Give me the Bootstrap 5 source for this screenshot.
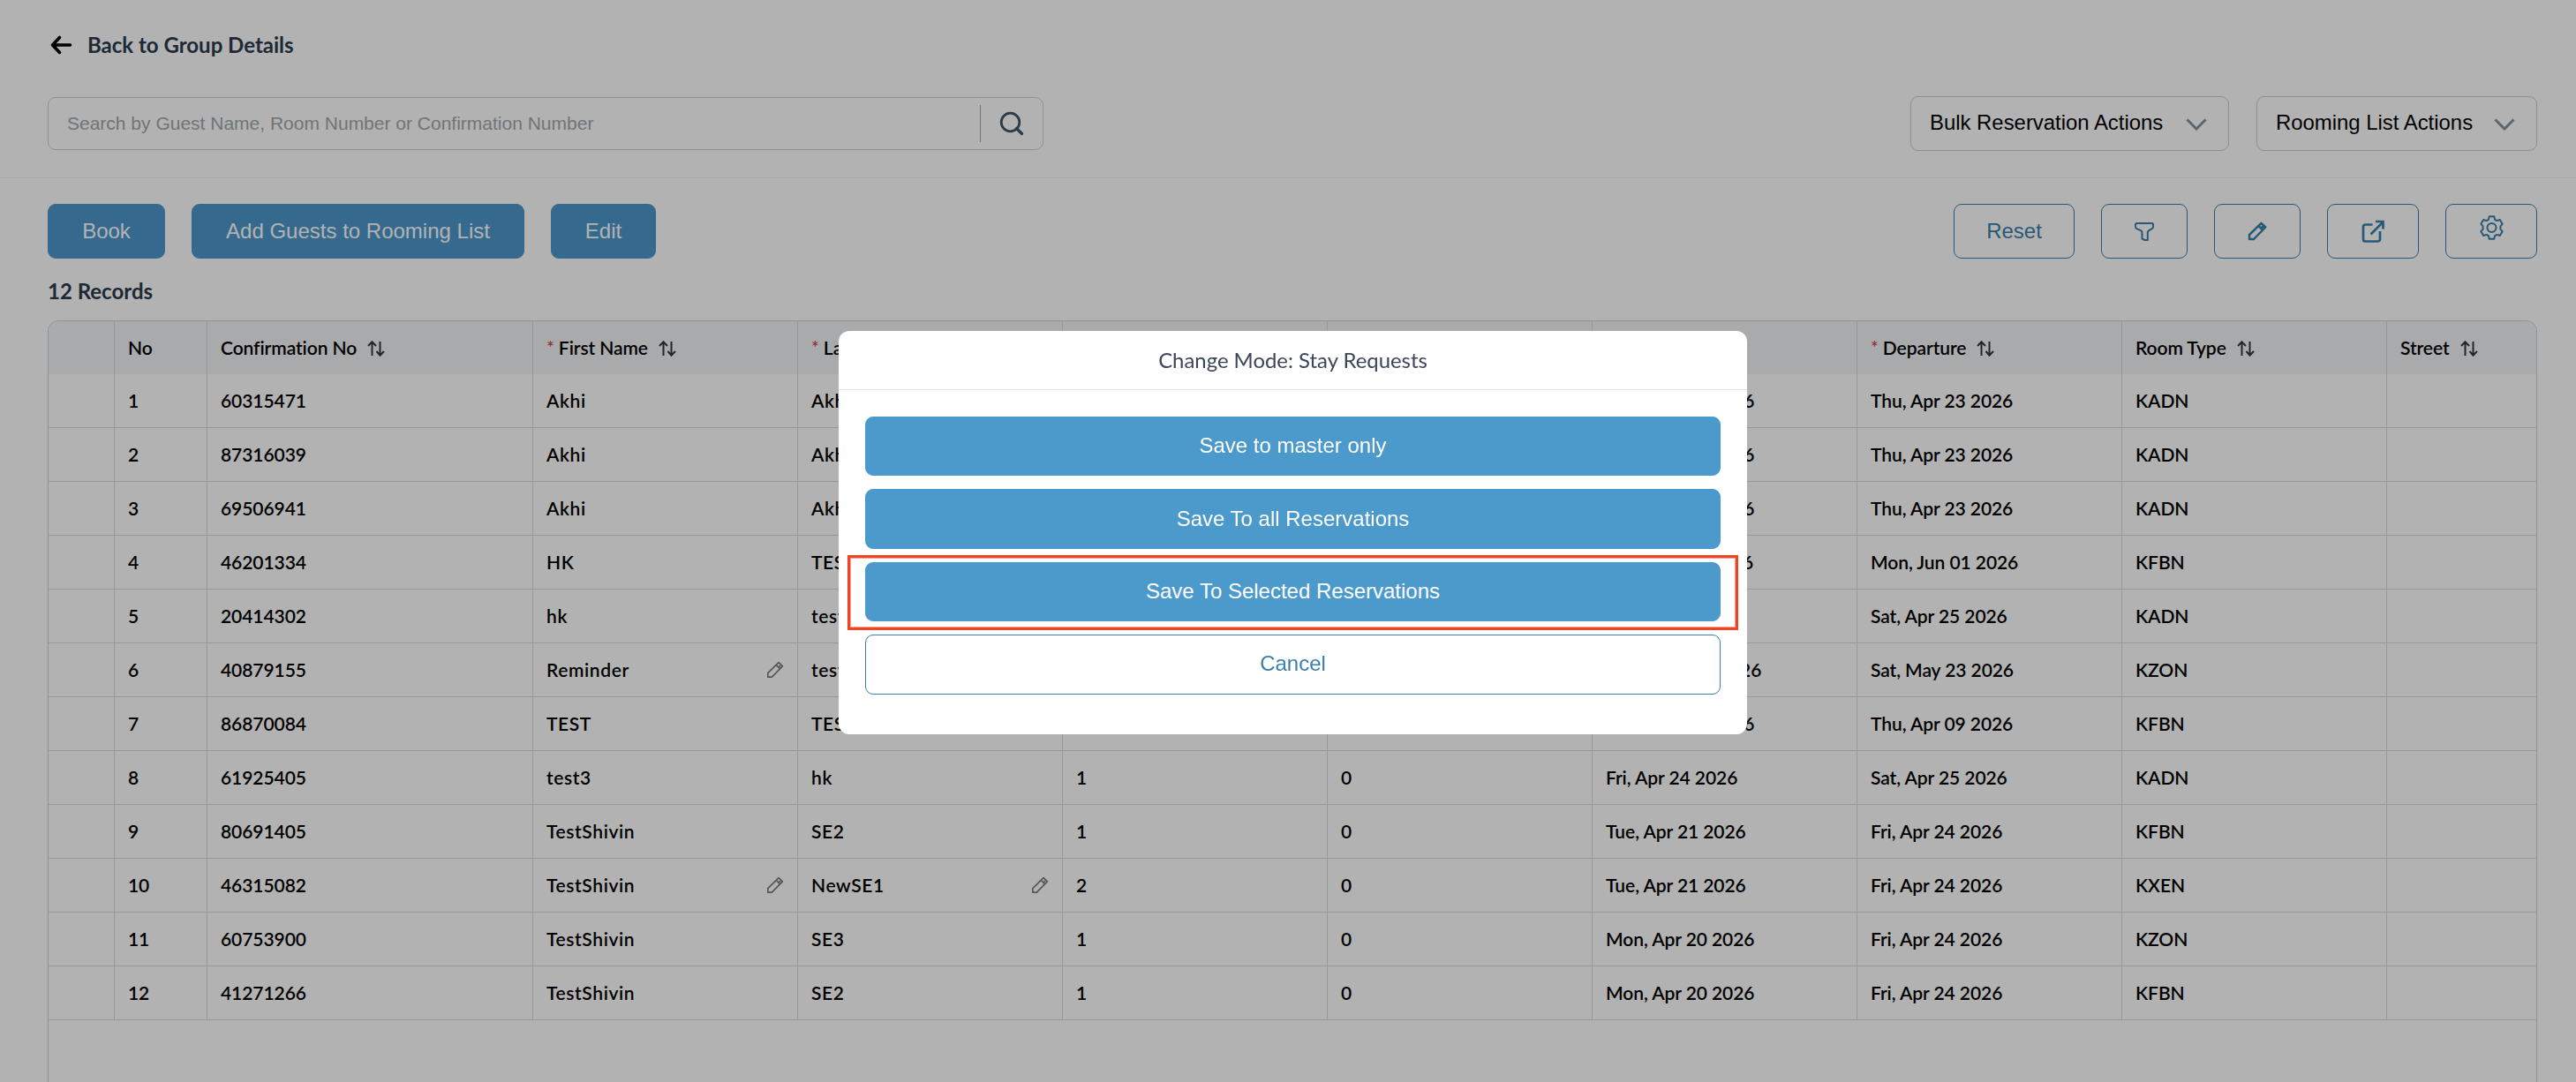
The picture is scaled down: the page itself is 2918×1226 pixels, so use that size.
<!DOCTYPE html>
<html lang="en">
<head>
<meta charset="utf-8">
<title>Rooming List</title>
<link href="https://cdn.jsdelivr.net/npm/bootstrap@5.3.0/dist/css/bootstrap.min.css" rel="stylesheet">
<style>
  body { font-family: Lato, sans-serif; font-size: 21px; color: #000; background: #fff; overflow: hidden; height: 1226px; }
  .arial { font-family: "Liberation Sans", Arial, sans-serif; }
  .topbar { height: 202px; padding: 0 44px 0 54px; border-bottom: 1px solid #eef0f2; }
  .backlink { height: 50px; margin-top: 26px; padding-left: 3px; gap: 17px; font-size: 24px; color: #2d3c4e; font-weight: 700; }
  .toolrow { margin-top: 33px; }
  .searchbox { width: 1128px; height: 60px; margin-top: 1px; border: 1px solid #d0d2d3; border-radius: 9px; }
  .searchbox .hint { padding-left: 21px; font-size: 21px; color: #9fa8ac; }
  .searchbox .vr { width: 1px; min-height: 0; height: 42px; opacity: 1; background: #a0a6a9; }
  .searchbox .go { width: 70px; }
  .menu-btn { height: 62px; border: 1px solid #ccced0; border-radius: 9px; font-size: 23.9px; padding: 0 0 3px 21px; color: #000; }
  .menu-btn svg { margin-top: 5px; }
  .actions { padding: 29px 44px 0 54px; }
  .abtn { --bs-btn-border-radius: 9px; --bs-btn-font-size: 24px; --bs-btn-padding-y: 0; --bs-btn-padding-x: 0; height: 62px; font-family: "Liberation Sans", Arial, sans-serif; }
  .fillbtn, .fillbtn:hover { background: #4c99cc; color: #fff; border-color: #4c99cc; }
  .linebtn, .linebtn:hover { background: #fff; color: #3a7fad; border-color: #3a7fad; }
  .records { font-size: 24px; font-weight: 700; color: #2d3c4e; line-height: 36px; margin: 19px 0 15px 54px; }
  .gridbox { margin: 0 44px 0 54px; height: 900px; border: 1px solid #d0d2d3; border-radius: 12px; overflow: hidden; }
  .gridbox table { table-layout: fixed; width: 100%; border-collapse: separate; border-spacing: 0; margin: 0; }
  .gridbox th, .gridbox td { height: 61px; padding: 0 15px 1px; vertical-align: middle; border-right: 1px solid #d9dadc; white-space: nowrap; overflow: hidden; font-weight: 600; line-height: 30px; letter-spacing: -.07px; }
  .gridbox th:last-child, .gridbox td:last-child { border-right: 0; }
  .gridbox th { height: 60px; background: #f3f4f7; }
  .gridbox td { border-bottom: 1px solid #d9dadc; }
  .req { color: #d0413a; font-weight: 400; margin-right: 5px; }
  .sorter { margin-left: 12px; vertical-align: -2px; }
  .spaced { letter-spacing: .6px; }
  .modal-backdrop { --bs-backdrop-opacity: .3; width: 100%; height: 100%; }
  .modal-dialog.save { width: 1029px; max-width: none; margin: 375px 0 0 950px; }
  .save .modal-content { height: 457px; border: 0; border-radius: 12px; }
  .save .modal-header { height: 67px; padding: 0; border-color: #dfe1e4; font-size: 23.9px; color: #3a475a; }
  .save .modal-body { padding: 30px 30px 0; gap: 15px; font-size: 24px; }
  .save .abtn { height: 67.4px; width: 100%; padding-bottom: 1px; }
  .marker { position: absolute; left: -20px; right: -20px; top: -8px; bottom: -10px; border: 3px solid #ee4423; outline: 1px solid #f7a192; outline-offset: -4px; }
</style>
</head>
<body>
<svg width="0" height="0" class="position-absolute">
  <symbol id="i-sort" viewBox="0 0 20 18"><path d="M5.500 17V1.500M1 6l4.500-4.700L10 6M14.500 1v15.500M10.500 12l4 4.700L19 12" fill="none" stroke="#303743" stroke-width="2"/></symbol>
  <symbol id="i-down" viewBox="0 0 24 14"><path d="M1.500 1.500L12 12 22.500 1.500" fill="none" stroke="#84929a" stroke-width="3"/></symbol>
  <symbol id="i-pencil" viewBox="0 0 22 22"><path d="M2 20v-5L15.500 1.800l4.700 4.700L7 20zM12.500 5l4.500 4.500M15 8l2.500-2.500" fill="none" stroke="currentColor" stroke-linejoin="round"/></symbol>
</svg>

<header class="topbar d-flex flex-column">
  <div class="backlink d-flex align-items-center">
    <svg width="25" height="22" viewBox="0 0 25 22"><path d="M22.500 11H4M10.500 2.500L2.500 11l8 8.500" fill="none" stroke="#000" stroke-width="3.600" stroke-linecap="round" stroke-linejoin="round"/></svg>
    <span>Back to Group Details</span>
  </div>
  <div class="toolrow d-flex justify-content-between">
    <div class="searchbox arial d-flex align-items-center">
      <span class="hint flex-grow-1">Search by Guest Name, Room Number or Confirmation Number</span>
      <span class="vr align-self-center"></span>
      <span class="go d-flex justify-content-center"><svg width="28" height="28" viewBox="0 0 28 28"><circle cx="12.500" cy="12.500" r="10.300" fill="none" stroke="#415563" stroke-width="2.800"/><path d="M19.500 19.500l6 6" stroke="#415563" stroke-width="3.200" stroke-linecap="round"/></svg></span>
    </div>
    <div class="d-flex" style="gap:31px">
      <div class="menu-btn arial d-flex align-items-center" style="width:361px"><span class="lbl flex-grow-1">Bulk Reservation Actions</span><svg class="me-4" width="24" height="14"><use href="#i-down"/></svg></div>
      <div class="menu-btn arial d-flex align-items-center" style="width:318px"><span class="lbl flex-grow-1">Rooming List Actions</span><svg class="me-4" width="24" height="14"><use href="#i-down"/></svg></div>
    </div>
  </div>
</header>

<div class="actions d-flex justify-content-between">
  <div class="d-flex" style="gap:30px">
    <button class="btn abtn fillbtn" style="width:133px">Book</button>
    <button class="btn abtn fillbtn" style="width:377px">Add Guests to Rooming List</button>
    <button class="btn abtn fillbtn" style="width:119px">Edit</button>
  </div>
  <div class="d-flex" style="gap:30px">
    <button class="btn abtn linebtn" style="width:137px">Reset</button>
    <button class="btn abtn linebtn d-flex align-items-center justify-content-center" style="width:98px"><svg width="22" height="21" viewBox="0 0 22 21" fill="none" stroke="currentColor" stroke-width="2" stroke-linejoin="round"><path d="M2.500 1h17c1 0 1.500.5 1.500 1.500V5c0 .8-.4 1.400-1 1.800L16 9.300c-.8.500-1.200 1.200-1.200 2V20h-3.300l-3-1.500v-7.200c0-.8-.4-1.500-1.200-2L2 6.800C1.400 6.400 1 5.800 1 5V2.500C1 1.500 1.500 1 2.500 1z"/></svg></button>
    <button class="btn abtn linebtn d-flex align-items-center justify-content-center" style="width:98px"><svg width="22" height="22" stroke-width="2.500"><use href="#i-pencil"/></svg></button>
    <button class="btn abtn linebtn d-flex align-items-center justify-content-center" style="width:104px"><svg width="26" height="26" viewBox="0 0 26 26" fill="none" stroke="currentColor" stroke-width="2.700"><path d="M12.500 5.500H4.500A2.500 2.500 0 0 0 2 8v14a2.500 2.500 0 0 0 2.500 2.500h14A2.500 2.500 0 0 0 21 22v-9M10.500 16.500L24 3M16 2h8.500v8.500"/></svg></button>
    <button class="btn abtn linebtn d-flex align-items-center justify-content-center pb-2" style="width:104px"><svg class="gear" width="27" height="28" viewBox="0 0 27 28" fill="none" stroke="currentColor" stroke-width="2" stroke-linejoin="round"><circle cx="13.500" cy="14" r="5"/><path d="M10.700 1.200h5.600l.8 3.600 2.300 1.300 3.400-1.100 2.800 4.800-2.200 2.500v3.400l2.200 2.500-2.800 4.800-3.400-1.100-2.300 1.300-.8 3.600h-5.600l-.8-3.600-2.300-1.300L4.200 23l-2.800-4.800 2.200-2.500v-3.400L1.400 9.800 4.200 5l3.400 1.100 2.300-1.300z"/></svg></button>
  </div>
</div>

<div class="records">12 Records</div>

<div class="gridbox">
  <table>
    <colgroup><col style="width:75px"><col style="width:105px"><col style="width:369px"><col style="width:300px"><col style="width:300px"><col style="width:300px"><col style="width:300px"><col style="width:300px"><col style="width:300px"><col style="width:300px"><col></colgroup>
    <thead><tr id="head"></tr></thead>
    <tbody id="rows"></tbody>
  </table>
</div>

<div class="modal-backdrop show"></div>
<div class="modal d-block" tabindex="-1">
  <div class="modal-dialog save">
    <div class="modal-content">
      <div class="modal-header justify-content-center">Change Mode: Stay Requests</div>
      <div class="modal-body d-flex flex-column">
        <button class="btn abtn fillbtn flex-shrink-0">Save to master only</button>
        <button class="btn abtn fillbtn flex-shrink-0">Save To all Reservations</button>
        <div class="position-relative d-flex"><button class="btn abtn fillbtn">Save To Selected Reservations</button><span class="marker"></span></div>
        <button class="btn abtn linebtn flex-shrink-0">Cancel</button>
      </div>
    </div>
  </div>
</div>

<script src="https://cdn.jsdelivr.net/npm/bootstrap@5.3.0/dist/js/bootstrap.bundle.min.js"></script>
<script>
  const heads = ['', 'No', 'Confirmation No', '*First Name', '*Last Name', '', '', '', '*Departure', 'Room Type', 'Street'];
  document.getElementById('head').innerHTML = heads.map((h, i) => {
    const req = h[0] === '*' ? '<span class="req">*</span>' : '';
    const sort = h && i > 1 ? '<svg class="sorter" width="20" height="18"><use href="#i-sort"/></svg>' : '';
    return `<th>${req}${h.replace('*', '')}${sort}</th>`;
  }).join('');

  const rows = [
    ['60315471', 'Akhi', 'Akhi', '', '', 'Mon, Apr 20 2026', 'Thu, Apr 23 2026', 'KADN'],
    ['87316039', 'Akhi', 'Akhi', '', '', 'Mon, Apr 20 2026', 'Thu, Apr 23 2026', 'KADN'],
    ['69506941', 'Akhi', 'Akhi', '', '', 'Mon, Apr 20 2026', 'Thu, Apr 23 2026', 'KADN'],
    ['46201334', 'HK', 'TEST', '', '', 'Mon, Jun 01 2026', 'Mon, Jun 01 2026', 'KFBN'],
    ['20414302', 'hk', 'test', '', '', 'Fri, Apr 24 2026', 'Sat, Apr 25 2026', 'KADN'],
    ['40879155', 'Reminder~', 'test', '', '', 'Wed, May 20 2026', 'Sat, May 23 2026', 'KZON'],
    ['86870084', 'TEST', 'TEST', '', '', 'Mon, Apr 06 2026', 'Thu, Apr 09 2026', 'KFBN'],
    ['61925405', 'test3', 'hk', 1, 0, 'Fri, Apr 24 2026', 'Sat, Apr 25 2026', 'KADN'],
    ['80691405', 'TestShivin', 'SE2', 1, 0, 'Tue, Apr 21 2026', 'Fri, Apr 24 2026', 'KFBN'],
    ['46315082', 'TestShivin~', 'NewSE1~', 2, 0, 'Tue, Apr 21 2026', 'Fri, Apr 24 2026', 'KXEN'],
    ['60753900', 'TestShivin', 'SE3', 1, 0, 'Mon, Apr 20 2026', 'Fri, Apr 24 2026', 'KZON'],
    ['41271266', 'TestShivin', 'SE2', 1, 0, 'Mon, Apr 20 2026', 'Fri, Apr 24 2026', 'KFBN']
  ];
  const cell = (v, i) => {
    const s = String(v), named = i === 1 || i === 2;
    const pen = s.endsWith('~') ? '<svg width="20" height="20" stroke-width="1.8" style="color:#777c80"><use href="#i-pencil"/></svg>' : '';
    return `<td><div class="d-flex align-items-center justify-content-between${named ? ' spaced' : ''}"><span class="val">${s.replace('~', '')}</span>${pen}</div></td>`;
  };
  document.getElementById('rows').innerHTML = rows.map((r, n) =>
    `<tr><td></td><td>${n + 1}</td>${r.map(cell).join('')}<td></td></tr>`).join('');
</script>
</body>
</html>
